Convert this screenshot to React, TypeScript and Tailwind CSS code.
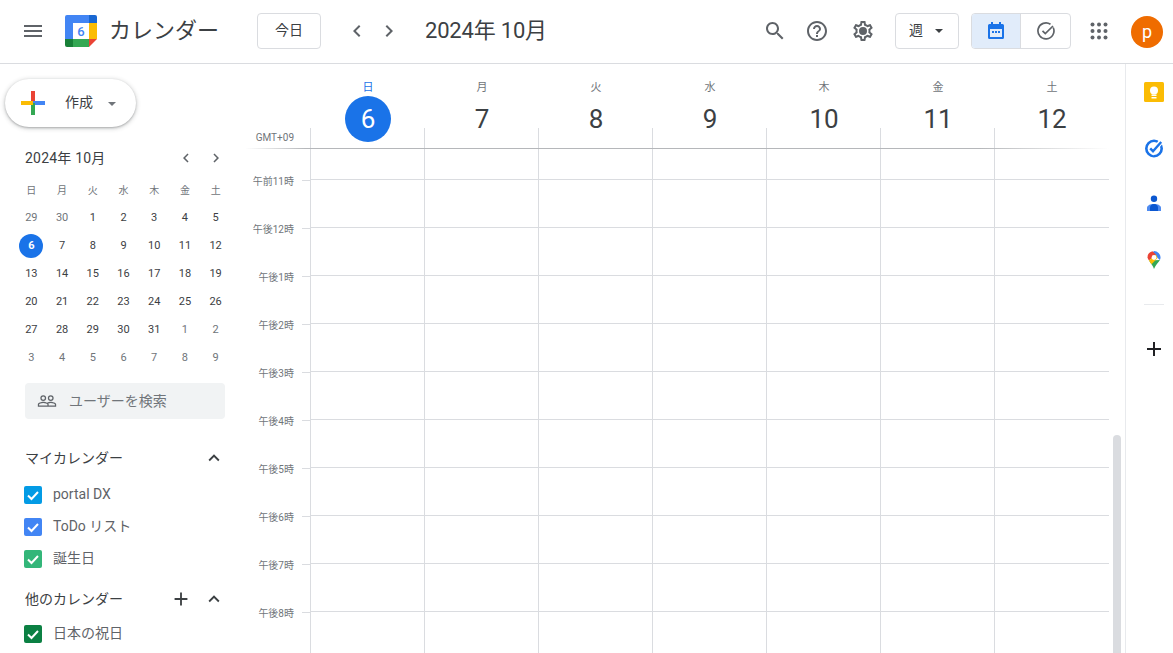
const days = [
  { label: "日", num: 6, today: true },
  { label: "月", num: 7 },
  { label: "火", num: 8 },
  { label: "水", num: 9 },
  { label: "木", num: 10 },
  { label: "金", num: 11 },
  { label: "土", num: 12 },
];

const hours = ["午前11時", "午後12時", "午後1時", "午後2時", "午後3時", "午後4時", "午後5時", "午後6時", "午後7時", "午後8時"];

const miniWeek = ["日", "月", "火", "水", "木", "金", "土"];

const miniDays = [
  [29, 30, 1, 2, 3, 4, 5],
  [6, 7, 8, 9, 10, 11, 12],
  [13, 14, 15, 16, 17, 18, 19],
  [20, 21, 22, 23, 24, 25, 26],
  [27, 28, 29, 30, 31, 1, 2],
  [3, 4, 5, 6, 7, 8, 9],
];

const font = "font-['Roboto','Noto_Sans_CJK_JP',sans-serif]";

function Icon({ d, size = 24, className = "" }: { d: string; size?: number; className?: string }) {
  return (
    <svg width={size} height={size} viewBox="0 0 24 24" className={className} fill="currentColor">
      <path d={d} />
    </svg>
  );
}

const menuPath = "M3 18h18v-2H3v2zm0-5h18v-2H3v2zm0-7v2h18V6H3z";
const leftPath = "M15.41 7.41 14 6l-6 6 6 6 1.41-1.41L10.83 12z";
const rightPath = "M8.59 16.59 10 18l6-6-6-6-1.41 1.41L13.17 12z";
const upPath = "M7.41 15.41 12 10.83l4.59 4.58L18 14l-6-6-6 6z";
const plusPath = "M19 13h-6v6h-2v-6H5v-2h6V5h2v6h6v2z";
const searchPath = "M15.5 14h-.79l-.28-.27C15.41 12.59 16 11.11 16 9.5 16 5.91 13.09 3 9.5 3S3 5.91 3 9.5 5.91 16 9.5 16c1.61 0 3.09-.59 4.23-1.57l.27.28v.79l5 4.99L20.49 19l-4.99-5zm-6 0C7.01 14 5 11.99 5 9.5S7.01 5 9.5 5 14 7.01 14 9.5 11.99 14 9.5 14z";
const helpPath = "M11 18h2v-2h-2v2zm1-16C6.48 2 2 6.48 2 12s4.48 10 10 10 10-4.48 10-10S17.52 2 12 2zm0 18c-4.41 0-8-3.59-8-8s3.59-8 8-8 8 3.59 8 8-3.59 8-8 8zm0-14c-2.21 0-4 1.79-4 4h2c0-1.1.9-2 2-2s2 .9 2 2c0 2-3 1.75-3 5h2c0-2.25 3-2.5 3-5 0-2.21-1.79-4-4-4z";
const gearPath = "M19.43 12.98c.04-.32.07-.64.07-.98 0-.34-.03-.66-.07-.98l2.11-1.65c.19-.15.24-.42.12-.64l-2-3.46c-.09-.16-.26-.25-.44-.25-.06 0-.12.01-.17.03l-2.49 1c-.52-.4-1.08-.73-1.69-.98l-.38-2.65C14.46 2.18 14.25 2 14 2h-4c-.25 0-.46.18-.49.42l-.38 2.65c-.61.25-1.17.59-1.69.98l-2.49-1c-.06-.02-.12-.03-.18-.03-.17 0-.34.09-.43.25l-2 3.46c-.13.22-.07.49.12.64l2.11 1.65c-.04.32-.07.65-.07.98 0 .33.03.66.07.98l-2.11 1.65c-.19.15-.24.42-.12.64l2 3.46c.09.16.26.25.44.25.06 0 .12-.01.17-.03l2.49-1c.52.4 1.08.73 1.69.98l.38 2.65c.03.24.24.42.49.42h4c.25 0 .46-.18.49-.42l.38-2.65c.61-.25 1.17-.59 1.69-.98l2.49 1c.06.02.12.03.18.03.17 0 .34-.09.43-.25l2-3.46c.12-.22.07-.49-.12-.64l-2.11-1.65zm-1.98-1.71c.04.31.05.52.05.73 0 .21-.02.43-.05.73l-.14 1.13.89.7 1.08.84-.7 1.21-1.27-.51-1.04-.42-.9.68c-.43.32-.84.56-1.25.73l-1.06.43-.16 1.13-.2 1.35h-1.4l-.19-1.35-.16-1.13-1.06-.43c-.43-.18-.83-.41-1.23-.71l-.91-.7-1.06.43-1.27.51-.7-1.21 1.08-.84.89-.7-.14-1.13c-.03-.31-.05-.54-.05-.74s.02-.43.05-.73l.14-1.13-.89-.7-1.08-.84.7-1.21 1.27.51 1.04.42.9-.68c.43-.32.84-.56 1.25-.73l1.06-.43.16-1.13.2-1.35h1.39l.19 1.35.16 1.13 1.06.43c.43.18.83.41 1.23.71l.91.7 1.06-.43 1.27-.51.7 1.21-1.07.85-.89.7.14 1.13zM12 8a4 4 0 1 0 0 8 4 4 0 0 0 0-8z";
const peoplePath = "M16.5 13c-1.2 0-3.07.34-4.5 1-1.43-.67-3.3-1-4.5-1C5.33 13 1 14.08 1 16.25V19h22v-2.75c0-2.17-4.33-3.25-6.5-3.25zm-4 4.5h-10v-1.25c0-.54 2.56-1.75 5-1.75s5 1.21 5 1.75v1.25zm9 0H14v-1.25c0-.46-.2-.86-.52-1.22.88-.3 1.96-.53 3.02-.53 2.44 0 5 1.21 5 1.75v1.25zM7.5 12a3.5 3.5 0 1 0 0-7 3.5 3.5 0 0 0 0 7zm0-5.5a2 2 0 1 1 0 4 2 2 0 0 1 0-4zm9 5.5a3.5 3.5 0 1 0 0-7 3.5 3.5 0 0 0 0 7zm0-5.5a2 2 0 1 1 0 4 2 2 0 0 1 0-4z";

function Logo() {
  return (
    <svg width="32" height="32" viewBox="0 0 32 32" className="flex-none">
      <path d="M2 0h22v8H8v16H0V2a2 2 0 0 1 2-2z" fill="#4285f4" />
      <path d="M24 0h6a2 2 0 0 1 2 2v6h-8z" fill="#1967d2" />
      <rect x="24" y="8" width="8" height="16" fill="#fbbc04" />
      <rect x="8" y="24" width="16" height="8" fill="#34a853" />
      <path d="M0 24h8v8H2a2 2 0 0 1-2-2z" fill="#188038" />
      <path d="M24 24h8l-8 8z" fill="#ea4335" />
      <rect x="8" y="8" width="16" height="16" fill="#fff" />
      <text x="16" y="21" textAnchor="middle" fontSize="13" fontFamily="Roboto" fontWeight="500" fill="#4285f4">6</text>
    </svg>
  );
}

function CreatePlus() {
  return (
    <svg width="26" height="26" viewBox="0 0 26 26">
      <rect x="11" y="1" width="4" height="12" fill="#ea4335" />
      <rect x="13" y="11" width="12" height="4" fill="#4285f4" />
      <rect x="11" y="13" width="4" height="12" fill="#34a853" />
      <rect x="1" y="11" width="12" height="4" fill="#fbbc04" />
    </svg>
  );
}

function CalendarCheck({ color, label, gap = "ml-[11px]" }: { color: string; label: string; gap?: string }) {
  return (
    <div className="flex h-8 items-center">
      <span className={`ml-[24px] flex h-[18px] w-[18px] items-center justify-center rounded-[2px] ${color}`}>
        <svg width="14" height="14" viewBox="0 0 14 14" fill="none" stroke="#fff" strokeWidth="2">
          <path d="M2 7.5 5.5 11 12 4" />
        </svg>
      </span>
      <span className={`mb-[2px] text-[14px] text-[#5f6368] ${gap}`}>{label}</span>
    </div>
  );
}

function Sidebar() {
  return (
    <aside className="w-[245px] flex-none overflow-hidden">
      <button className="ml-[5px] mt-[15px] flex h-12 w-[131px] items-center rounded-full bg-white pl-[15px] shadow-[0_1px_2px_0_rgba(60,64,67,0.3),0_1px_4px_1px_rgba(60,64,67,0.2)]">
        <CreatePlus />
        <span className="mb-[2px] ml-[19px] text-[14px] text-[#3c4043]">作成</span>
        <span className="ml-[15px] mt-px h-0 w-0 border-x-[4px] border-t-[4px] border-x-transparent border-t-[#70757a]" />
      </button>

      <div className="ml-[25px] mt-[20px] flex h-[22px] w-[200px] items-center text-[#3c4043]">
        <span className="text-[14px] tracking-[0.2px]">2024年 10月</span>
        <Icon d={leftPath} size={18} className="ml-auto text-[#5f6368]" />
        <Icon d={rightPath} size={18} className="ml-[12px] text-[#5f6368]" />
      </div>

      <div className="ml-[16px] mt-[12px] w-[215px]">
        <div className="grid h-[23px] grid-cols-7 text-center text-[10px] leading-[20px] text-[#70757a]">
          {miniWeek.map((w) => (
            <span key={w}>{w}</span>
          ))}
        </div>
        {miniDays.map((week, i) => (
          <div key={i} className="grid h-7 grid-cols-7 text-[11px]">
            {week.map((d, j) => {
              const muted = (i === 0 && d > 20) || (i >= 4 && d < 20);
              const today = i === 1 && j === 0;
              return (
                <span key={j} className="flex items-center justify-center">
                  <span
                    className={`flex h-6 w-6 items-center justify-center rounded-full ${
                      today ? "bg-[#1a73e8] font-bold text-white" : muted ? "text-[#70757a]" : "text-[#3c4043]"
                    }`}
                  >
                    {d}
                  </span>
                </span>
              );
            })}
          </div>
        ))}
      </div>

      <div className="ml-[25px] mt-[11px] flex h-9 w-[200px] items-center rounded-[4px] bg-[#f1f3f4] pl-[12px]">
        <Icon d={peoplePath} size={20} className="text-[#5f6368]" />
        <span className="ml-[12px] text-[14px] text-[#70757a]">ユーザーを検索</span>
      </div>

      <div className="ml-[25px] mt-[21px] flex h-9 w-[200px] items-center text-[14px] text-[#3c4043]">
        <span>マイカレンダー</span>
        <Icon d={upPath} size={22} className="ml-auto text-[#3c4043]" />
      </div>
      <div className="mt-[3px]">
        <CalendarCheck color="bg-[#039be5]" label="portal DX" />
        <CalendarCheck color="bg-[#4285f4]" label="ToDo リスト" />
        <CalendarCheck color="bg-[#33b679]" label="誕生日" />
      </div>
      <div className="ml-[25px] mt-[6px] flex h-9 w-[200px] items-center text-[14px] text-[#3c4043]">
        <span>他のカレンダー</span>
        <Icon d={plusPath} size={22} className="ml-auto text-[#3c4043]" />
        <Icon d={upPath} size={22} className="ml-[11px] text-[#3c4043]" />
      </div>
      <div className="mt-px">
        <CalendarCheck color="bg-[#0b8043]" label="日本の祝日" />
      </div>
    </aside>
  );
}

function TopBar() {
  return (
    <header className="flex h-16 flex-none items-center border-b border-[#dadce0] pb-[2px]">
      <Icon d={menuPath} className="ml-[21px] flex-none text-[#5f6368]" />
      <div className="ml-[20px]">
        <Logo />
      </div>
      <span className="ml-[12px] w-[148px] text-[22px] text-[#3c4043]">カレンダー</span>
      <button className="flex h-9 w-16 items-center justify-center rounded-[4px] border border-[#dadce0] text-[14px] text-[#3c4043]">今日</button>
      <Icon d={leftPath} className="ml-[24px] text-[#5f6368]" />
      <Icon d={rightPath} className="ml-[8px] text-[#5f6368]" />
      <span className="ml-[24px] text-[22px] tracking-[-0.2px] text-[#3c4043]">2024年 10月</span>

      <Icon d={searchPath} className="ml-auto text-[#5f6368]" />
      <Icon d={helpPath} className="ml-[18px] text-[#5f6368]" />
      <Icon d={gearPath} className="ml-[22px] text-[#5f6368]" />
      <button className="ml-[20px] flex h-9 w-16 items-center rounded-[4px] border border-[#dadce0] pl-[13px] text-[14px] text-[#3c4043]">
        週
        <span className="ml-[12px] h-0 w-0 border-x-[4px] border-t-[4px] border-x-transparent border-t-[#3c4043]" />
      </button>
      <div className="ml-3 flex h-9 w-[100px] overflow-hidden rounded-[4px] border border-[#dadce0]">
        <span className="flex w-[49px] items-center justify-center border-r border-[#dadce0] bg-[#e1ecfa]">
          <svg width="20" height="20" viewBox="0 0 20 20">
            <path d="M5 1h2v2h6V1h2v2h1.5A1.5 1.5 0 0 1 18 4.5v12a1.5 1.5 0 0 1-1.5 1.5h-13A1.5 1.5 0 0 1 2 16.500v-12A1.500 1.500 0 0 1 3.500 3H5z" fill="#1a73e8" />
            <rect x="4" y="8" width="12" height="8" fill="#e1ecfa" />
            <rect x="6" y="10" width="2" height="2" fill="#1a73e8" />
            <rect x="9" y="10" width="2" height="2" fill="#1a73e8" />
            <rect x="12" y="10" width="2" height="2" fill="#1a73e8" />
          </svg>
        </span>
        <span className="flex flex-1 items-center justify-center">
          <svg width="20" height="20" viewBox="0 0 20 20" fill="none" stroke="#5f6368" strokeWidth="1.7">
            <path d="M17.2 6.5A8 8 0 1 1 14.5 3.300" />
            <path d="M6.500 9.800 9.300 12.600 17 5" />
          </svg>
        </span>
      </div>
      <svg width="18" height="18" viewBox="0 0 18 18" fill="#5f6368" className="ml-[19px]">
        {[2.500, 9, 15.500].map((y) =>
          [2.500, 9, 15.500].map((x) => <circle key={`${x}-${y}`} cx={x} cy={y} r="2" />),
        )}
      </svg>
      <span className="ml-[23px] mr-[10px] mt-[2px] flex h-8 w-8 items-center justify-center rounded-full bg-[#ef6c00] text-[18px] text-white">p</span>
    </header>
  );
}

function CalendarGrid() {
  return (
    <main className="flex min-w-0 flex-1 flex-col overflow-hidden">
      <div className="flex h-[84px] flex-none">
        <div className="flex w-[65px] flex-none items-end justify-end pb-[3px] pr-[16px] text-[10px] leading-[14px] text-[#70757a]">GMT+09</div>
        {days.map((day) => (
          <div key={day.num} className="relative flex w-[114px] flex-none flex-col items-center pl-[2px] pt-[17px]">
            <span className={`text-[11px] leading-[14px] ${day.today ? "text-[#1a73e8]" : "text-[#70757a]"}`}>{day.label}</span>
            <span
              className={`relative z-10 mt-px flex h-[46px] w-[46px] items-center justify-center rounded-full text-[26px] ${
                day.today ? "bg-[#1a73e8] text-white" : "text-[#3c4043]"
              }`}
            >
              {day.num}
            </span>
            <span className="absolute bottom-0 left-0 h-5 w-px bg-[#dadce0]" />
          </div>
        ))}
      </div>
      <div className="h-px w-[864px] flex-none bg-[linear-gradient(to_right,transparent_0,#b5b7ba_7%,#b5b7ba_85%,transparent_100%)]" />
      <div className="flex min-h-0 flex-1">
        <div className="w-[65px] flex-none pt-[7px]">
          {hours.map((h) => (
            <div key={h} className="flex h-12 items-center justify-end text-[10px] text-[#70757a]">
              <span className="mr-2 mt-[2px]">{h}</span>
              <span className="h-px w-2 bg-[#dadce0]" />
            </div>
          ))}
        </div>
        <div className="w-[799px] flex-none">
          <Row height="h-[31px]" />
          {hours.map((h) => (
            <Row key={h} height="h-12" />
          ))}
          <Row height="h-12" />
        </div>
      </div>
    </main>
  );
}

function Row({ height }: { height: string }) {
  return (
    <div className={`flex border-b border-[#dadce0] ${height}`}>
      {days.map((d) => (
        <div key={d.num} className="w-[114px] flex-none border-l border-[#dadce0]" />
      ))}
    </div>
  );
}

function SidePanel() {
  return (
    <aside className="flex w-[48px] flex-none flex-col items-center border-l border-[#e8eaed] pl-[9px]">
      <svg width="20" height="20" viewBox="0 0 20 20" className="mt-[18px]">
        <rect width="20" height="20" rx="1.500" fill="#fbbc04" />
        <circle cx="10" cy="8.500" r="4" fill="#fff" />
        <rect x="7.500" y="12.500" width="5" height="1.500" fill="#fff" />
        <rect x="7.500" y="15" width="5" height="1.500" fill="#fff" />
      </svg>
      <svg width="20" height="20" viewBox="0 0 20 20" className="mt-[36px]">
        <circle cx="10" cy="10.500" r="7.700" fill="none" stroke="#1a73e8" strokeWidth="2.600" />
        <path d="M5.800 10.500 9 13.700 17.500 3" fill="none" stroke="#fff" strokeWidth="5" />
        <path d="M6.200 10.300 9 13.200 17.200 4" fill="none" stroke="#1a73e8" strokeWidth="2.400" />
      </svg>
      <svg width="20" height="20" viewBox="0 0 20 20" className="mt-[36px]">
        <circle cx="10" cy="4.800" r="3.200" fill="#0b57d0" />
        <path d="M3 17v-3c0-2.500 3-4 7-4s7 1.500 7 4v3z" fill="#4f8bf0" />
        <path d="M6 17v-3.500c0-2 1.800-3.500 4-3.500s4 1.500 4 3.500V17z" fill="#0b57d0" />
      </svg>
      <svg width="20" height="20" viewBox="0 0 20 20" className="mt-[36px]">
        <path d="M10 1a6.500 6.500 0 0 1 6.500 6.500c0 1-.2 1.800-.6 2.600L8.300 3.100A6.500 6.500 0 0 1 10 1z" fill="#4285f4" />
        <path d="M8.500 1.200 12 4.600 5 10.400A6.500 6.500 0 0 1 3.500 7.500 6.500 6.500 0 0 1 8.500 1.200z" fill="#ea4335" />
        <path d="M5 10.400 15.900 9.900c-1 2.300-4.500 4.800-5.900 9-.8-3-3.300-5.500-4.900-8.500z" fill="#34a853" />
        <path d="M5 10.400 12 4.600l1.500 3.500-5.900 6.200C6.700 13 5.700 11.800 5 10.400z" fill="#fbbc04" />
        <circle cx="10" cy="7.500" r="2.400" fill="#fff" />
      </svg>
      <div className="mt-[34px] h-px w-5 bg-[#e8eaed]" />
      <Icon d={plusPath} className="mt-[32px] text-[#202124]" />
    </aside>
  );
}

export default function App() {
  return (
    <div className={`flex h-screen w-full flex-col overflow-hidden bg-white ${font}`}>
      <TopBar />
      <div className="flex min-h-0 flex-1">
        <Sidebar />
        <CalendarGrid />
        <div className="w-4 flex-none pl-1 pt-[371px]">
          <div className="h-full w-2 rounded-t-full bg-[#dadce0]" />
        </div>
        <SidePanel />
      </div>
    </div>
  );
}
